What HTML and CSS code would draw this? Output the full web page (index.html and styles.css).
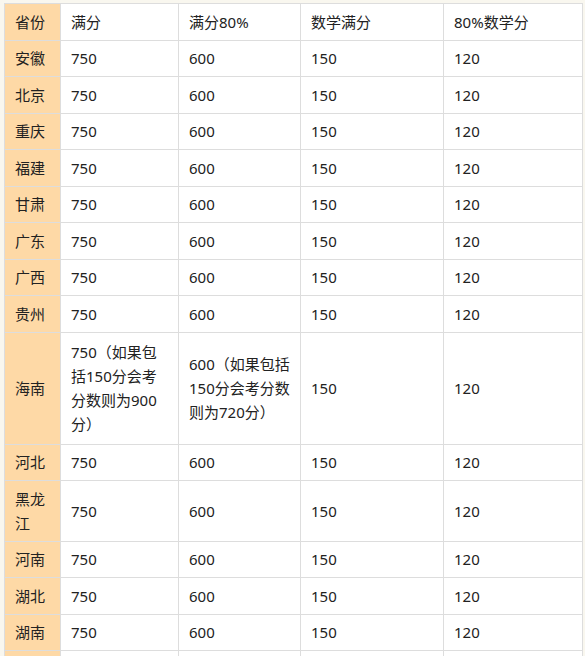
FILE: index.html
```html
<!DOCTYPE html>
<html lang="zh-CN">
<head>
<meta charset="utf-8">
<title>各省高考满分</title>
<link rel="stylesheet" href="styles.css">
</head>
<body>
<div class="page">
<table class="scores">
<colgroup>
<col class="c1"><col class="c2"><col class="c3"><col class="c4"><col class="c5">
</colgroup>
<tbody>
<tr><td class="prov">省份</td><td>满分</td><td>满分80%</td><td>数学满分</td><td>80%数学分</td></tr>
<tr><td class="prov">安徽</td><td>750</td><td>600</td><td>150</td><td>120</td></tr>
<tr><td class="prov">北京</td><td>750</td><td>600</td><td>150</td><td>120</td></tr>
<tr><td class="prov">重庆</td><td>750</td><td>600</td><td>150</td><td>120</td></tr>
<tr><td class="prov">福建</td><td>750</td><td>600</td><td>150</td><td>120</td></tr>
<tr><td class="prov">甘肃</td><td>750</td><td>600</td><td>150</td><td>120</td></tr>
<tr><td class="prov">广东</td><td>750</td><td>600</td><td>150</td><td>120</td></tr>
<tr><td class="prov">广西</td><td>750</td><td>600</td><td>150</td><td>120</td></tr>
<tr><td class="prov">贵州</td><td>750</td><td>600</td><td>150</td><td>120</td></tr>
<tr class="tall"><td class="prov">海南</td><td>750（如果包括150分会考分数则为900分）</td><td>600（如果包括150分会考分数则为720分）</td><td>150</td><td>120</td></tr>
<tr><td class="prov">河北</td><td>750</td><td>600</td><td>150</td><td>120</td></tr>
<tr><td class="prov">黑龙江</td><td>750</td><td>600</td><td>150</td><td>120</td></tr>
<tr><td class="prov">河南</td><td>750</td><td>600</td><td>150</td><td>120</td></tr>
<tr><td class="prov">湖北</td><td>750</td><td>600</td><td>150</td><td>120</td></tr>
<tr><td class="prov">湖南</td><td>750</td><td>600</td><td>150</td><td>120</td></tr>
<tr class="next"><td class="prov"></td><td></td><td></td><td></td><td></td></tr>
</tbody>
</table>
</div>
</body>
</html>
```
FILE: styles.css
```css
html, body {
  margin: 0;
  padding: 0;
  background: #f9f7ef;
}
.page {
  padding: 3px 0 0 4px;
}
.scores {
  border-collapse: collapse;
  table-layout: fixed;
  width: 578px;
  background: #ffffff;
  font-family: "Noto Sans", "Noto Sans CJK SC", sans-serif;
  font-size: 15px;
  color: #222222;
}
.c1 { width: 56px; }
.c2 { width: 118px; }
.c3 { width: 122px; }
.c4 { width: 143px; }
.c5 { width: 139px; }
.scores td {
  border: 1px solid #dddddd;
  padding: 5.75px 10px;
  line-height: 24px;
  vertical-align: middle;
  word-break: break-all;
}
.scores td.prov {
  background: #fed9a6;
}
.tall td {
  padding-top: 7.5px;
  padding-bottom: 7.5px;
}
.next td {
  height: 24px;
}
```
